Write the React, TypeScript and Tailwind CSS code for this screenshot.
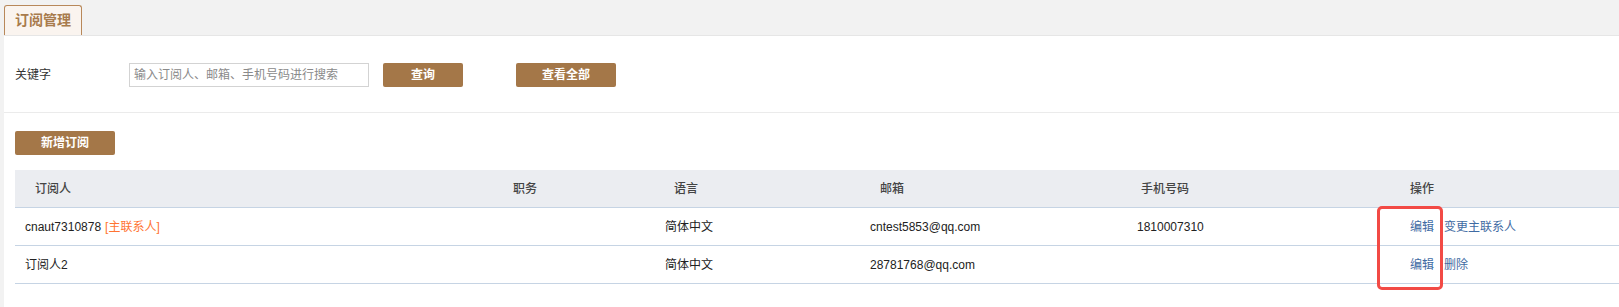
import { useState } from 'react'

type Subscriber = {
  name: string
  primary?: boolean
  title: string
  lang: string
  email: string
  phone: string
  actions: string[]
}

const rows: Subscriber[] = [
  { name: 'cnaut7310878', primary: true, title: '', lang: '简体中文', email: 'cntest5853@qq.com', phone: '1810007310', actions: ['编辑', '变更主联系人'] },
  { name: '订阅人2', title: '', lang: '简体中文', email: '28781768@qq.com', phone: '', actions: ['编辑', '删除'] },
]

const cols = 'grid grid-cols-[488px_152px_205px_267px_273px_1fr]'

export default function App() {
  const [keyword, setKeyword] = useState('')

  return (
    <div className="relative min-h-[307px] bg-[#f2f2f2] font-['Liberation_Sans','Noto_Sans_CJK_SC',sans-serif] text-[12px] text-[#333]">
      <div className="flex h-[35px] items-end pl-[4px]">
        <div className="flex h-[30px] w-[78px] items-center justify-center rounded-t-[3px] border border-b-0 border-[#b8885a] bg-[#faf4ef] text-[14px] font-bold text-[#a87b4c]">
          订阅管理
        </div>
      </div>

      <div className="ml-[4px] min-h-[272px] border-t border-[#e6e6e6] bg-white">
        <div className="flex h-[77px] items-center border-b border-[#ebebeb] pl-[11px] pt-[1px]">
          <span className="w-[114px]">关键字</span>
          <input
            value={keyword}
            onChange={(e) => setKeyword(e.target.value)}
            placeholder="输入订阅人、邮箱、手机号码进行搜索"
            className="h-[24px] w-[240px] border border-[#d3d3d3] px-[4px] text-[12px] outline-none placeholder:text-[#8a8a8a]"
          />
          <button className="ml-[14px] h-[24px] w-[80px] rounded-[2px] bg-[#a47748] font-bold text-white">查询</button>
          <button className="ml-[53px] h-[24px] w-[100px] rounded-[2px] bg-[#a47748] font-bold text-white">查看全部</button>
        </div>

        <div className="pl-[11px] pt-[18px]">
          <button className="h-[24px] w-[100px] rounded-[2px] bg-[#a47748] font-bold text-white">新增订阅</button>

          <div className="mt-[15px]">
            <div className={`${cols} h-[38px] items-center border-b border-[#c6d4e4] bg-[#ebedf1] font-medium text-[#444]`}>
              <div className="pl-[20px]">订阅人</div>
              <div className="pl-[10px]">职务</div>
              <div className="pl-[19px]">语言</div>
              <div className="pl-[20px]">邮箱</div>
              <div className="pl-[14px]">手机号码</div>
              <div className="pl-[10px]">操作</div>
            </div>
            {rows.map((r) => (
              <div key={r.email} className={`${cols} h-[38px] items-center border-b border-[#c6d4e4] text-[#222]`}>
                <div className="pl-[10px]">
                  {r.name}
                  {r.primary && <span className="ml-[4px] text-[#ff7433]">[主联系人]</span>}
                </div>
                <div className="pl-[10px]">{r.title}</div>
                <div className="pl-[10px]">{r.lang}</div>
                <div className="pl-[10px]">{r.email}</div>
                <div className="pl-[10px]">{r.phone}</div>
                <div className="flex gap-[10px] pl-[10px] text-[#3f6ba3]">
                  {r.actions.map((a) => (
                    <a key={a} href="#" onClick={(e) => e.preventDefault()}>{a}</a>
                  ))}
                </div>
              </div>
            ))}
          </div>
        </div>
      </div>

      {/* red highlight box drawn over the edit links */}
      <div className="pointer-events-none absolute left-[1377px] top-[206px] h-[84px] w-[66px] rounded-[5px] border-[3px] border-[#f24a45]" />
    </div>
  )
}
